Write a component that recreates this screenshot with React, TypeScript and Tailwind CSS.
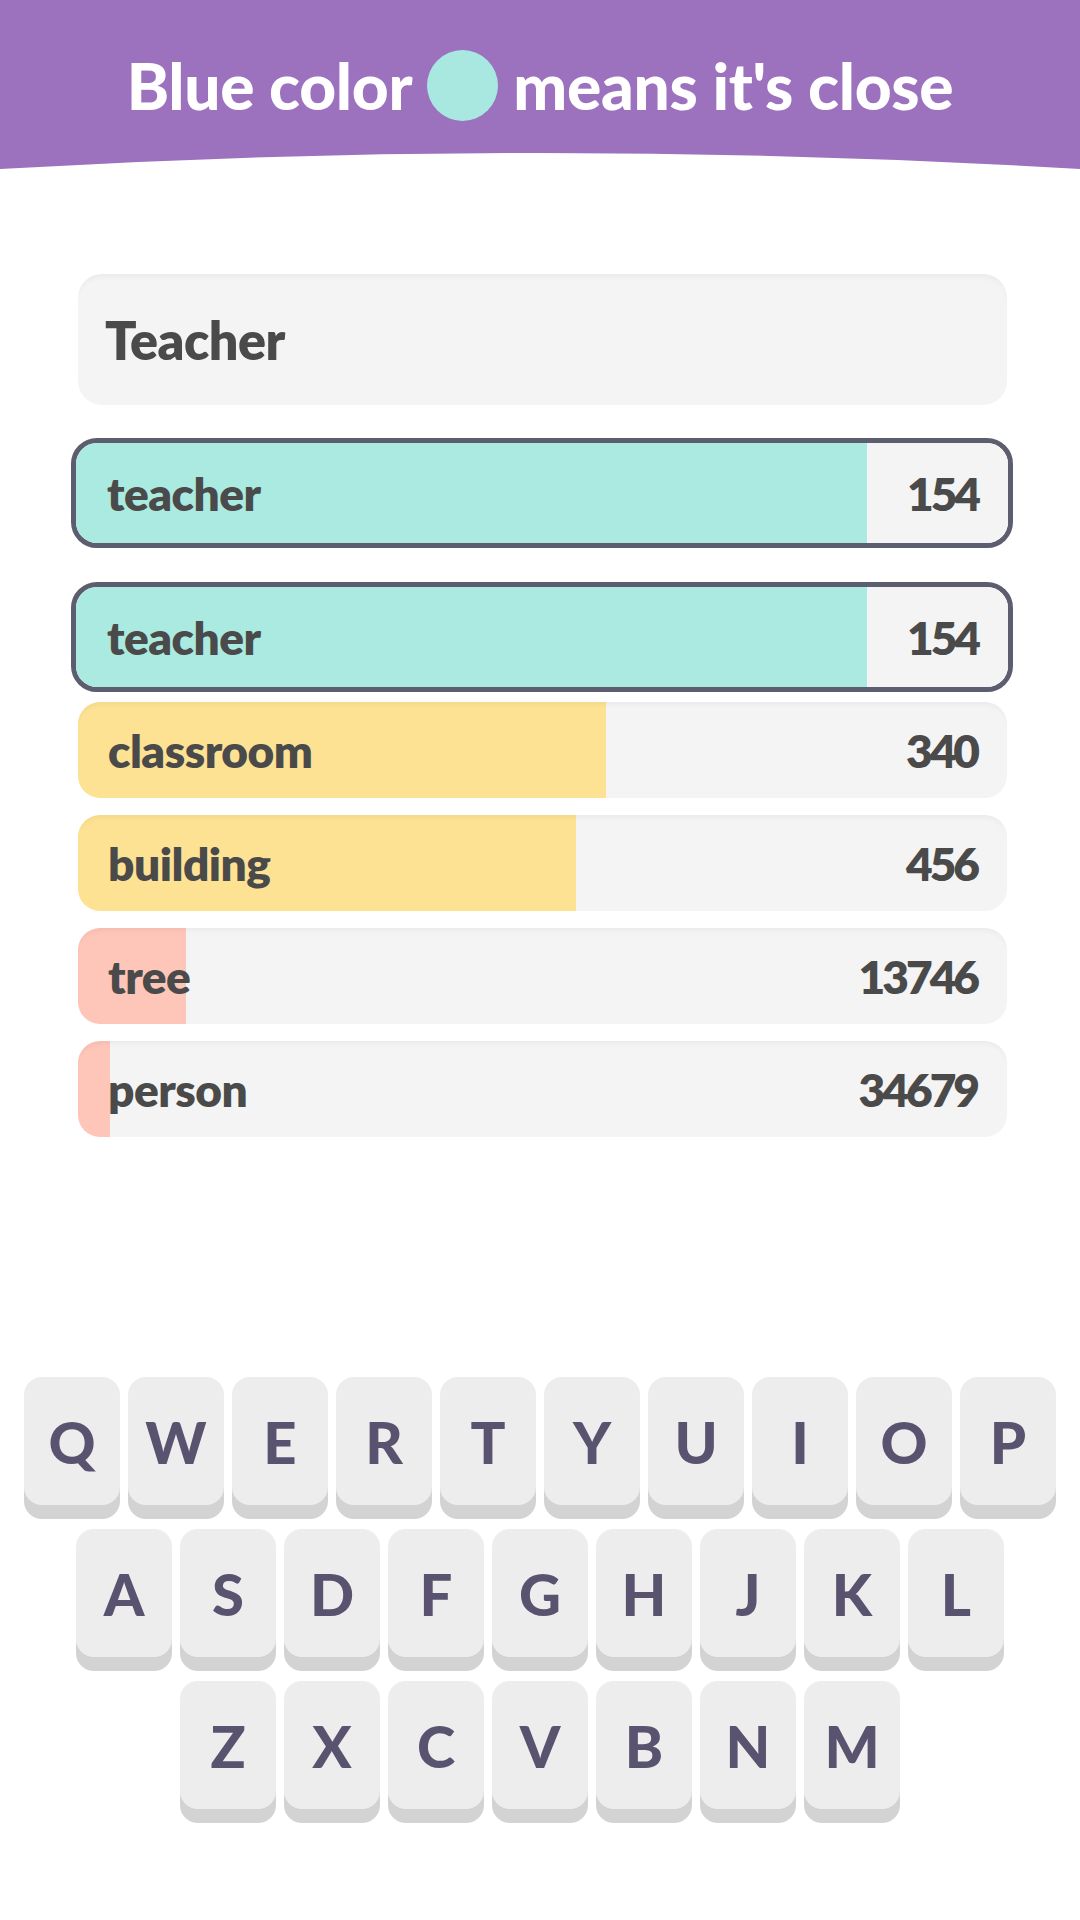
import React from "react";

type Row = { word: string; score: string; frac: number; color: string; highlight?: boolean };

const rows: Row[] = [
  { word: "teacher", score: "154", frac: 0.849, color: "#aaeae1", highlight: true },
  { word: "classroom", score: "340", frac: 0.568, color: "#fde293" },
  { word: "building", score: "456", frac: 0.536, color: "#fde293" },
  { word: "tree", score: "13746", frac: 0.116, color: "#fec5b9" },
  { word: "person", score: "34679", frac: 0.034, color: "#fec5b9" },
];

function bg(frac: number, color: string) {
  const p = (frac * 100).toFixed(2) + "%";
  return { background: `linear-gradient(to right, ${color} ${p}, #f4f4f4 ${p})` };
}

function HighlightRow({ r }: { r: Row }) {
  return (
    <div className="ml-[71px] mr-[67px] h-[110px] rounded-[26px] border-[5px] border-[#5d5d70] overflow-hidden">
      <div
        className="h-full flex items-center justify-between pl-[31px] pr-[30px] text-[46px] font-extrabold text-[#4a4a4a]"
        style={bg(r.frac, r.color)}
      >
        <span className="tracking-[-0.5px]">{r.word}</span>
        <span className="tracking-[-3px]">{r.score}</span>
      </div>
    </div>
  );
}

function NormalRow({ r }: { r: Row }) {
  return (
    <div
      className="ml-[78px] mr-[73px] h-[96px] rounded-[22px] overflow-hidden flex items-center justify-between pl-[30px] pr-[30px] text-[46px] font-extrabold text-[#4a4a4a] shadow-[inset_0_6px_6px_-4px_rgba(0,0,0,0.05)]"
      style={bg(r.frac, r.color)}
    >
      <span className="tracking-[-0.5px]">{r.word}</span>
      <span className="tracking-[-3px]">{r.score}</span>
    </div>
  );
}

function Key({ k }: { k: string }) {
  return (
    <div className="w-[96px] h-[128px] rounded-[18px] bg-[#ededed] shadow-[0_14px_0_#d3d3d3] flex items-center justify-center text-[58px] font-black text-[#59536f]">
      {k}
    </div>
  );
}

export default function App() {
  const kb = ["QWERTYUIOP", "ASDFGHJKL", "ZXCVBNM"];
  return (
    <div
      className="w-[1080px] h-[1920px] bg-white flex flex-col overflow-hidden"
      style={{ fontFamily: "Lato, 'Open Sans', sans-serif" }}
    >
      <div className="h-[153px] bg-[#9c72bf] flex items-center justify-center pt-[18px] text-white text-[64px] font-black tracking-[-0.3px]">
        <span>Blue color</span>
        <span className="mx-[15px] w-[71px] h-[71px] rounded-full bg-[#a8e8e0] inline-block"></span>
        <span>means it's close</span>
      </div>
      <svg width="1080" height="16" viewBox="0 0 1080 16" className="block">
        <path d="M0,0 H1080 V16 Q540,-16 0,16 Z" fill="#9c72bf" />
      </svg>

      <div className="mt-[105px] ml-[78px] mr-[73px] h-[131px] rounded-[24px] bg-[#f4f4f4] flex items-center px-[27px] text-[52px] font-extrabold tracking-[-0.5px] text-[#4a4a4a] shadow-[inset_0_6px_6px_-4px_rgba(0,0,0,0.05)]">
        Teacher
      </div>

      <div className="mt-[33px]">
        <HighlightRow r={rows[0]} />
      </div>
      <div className="mt-[34px]">
        <HighlightRow r={rows[0]} />
      </div>
      <div className="mt-[10px] flex flex-col gap-[17px]">
        {rows.slice(1).map((r) => (
          <NormalRow key={r.word} r={r} />
        ))}
      </div>

      <div className="mt-auto mb-[111px] flex flex-col items-center gap-[24px]">
        {kb.map((row) => (
          <div key={row} className="flex gap-[8px]">
            {row.split("").map((k) => (
              <Key key={k} k={k} />
            ))}
          </div>
        ))}
      </div>
    </div>
  );
}
